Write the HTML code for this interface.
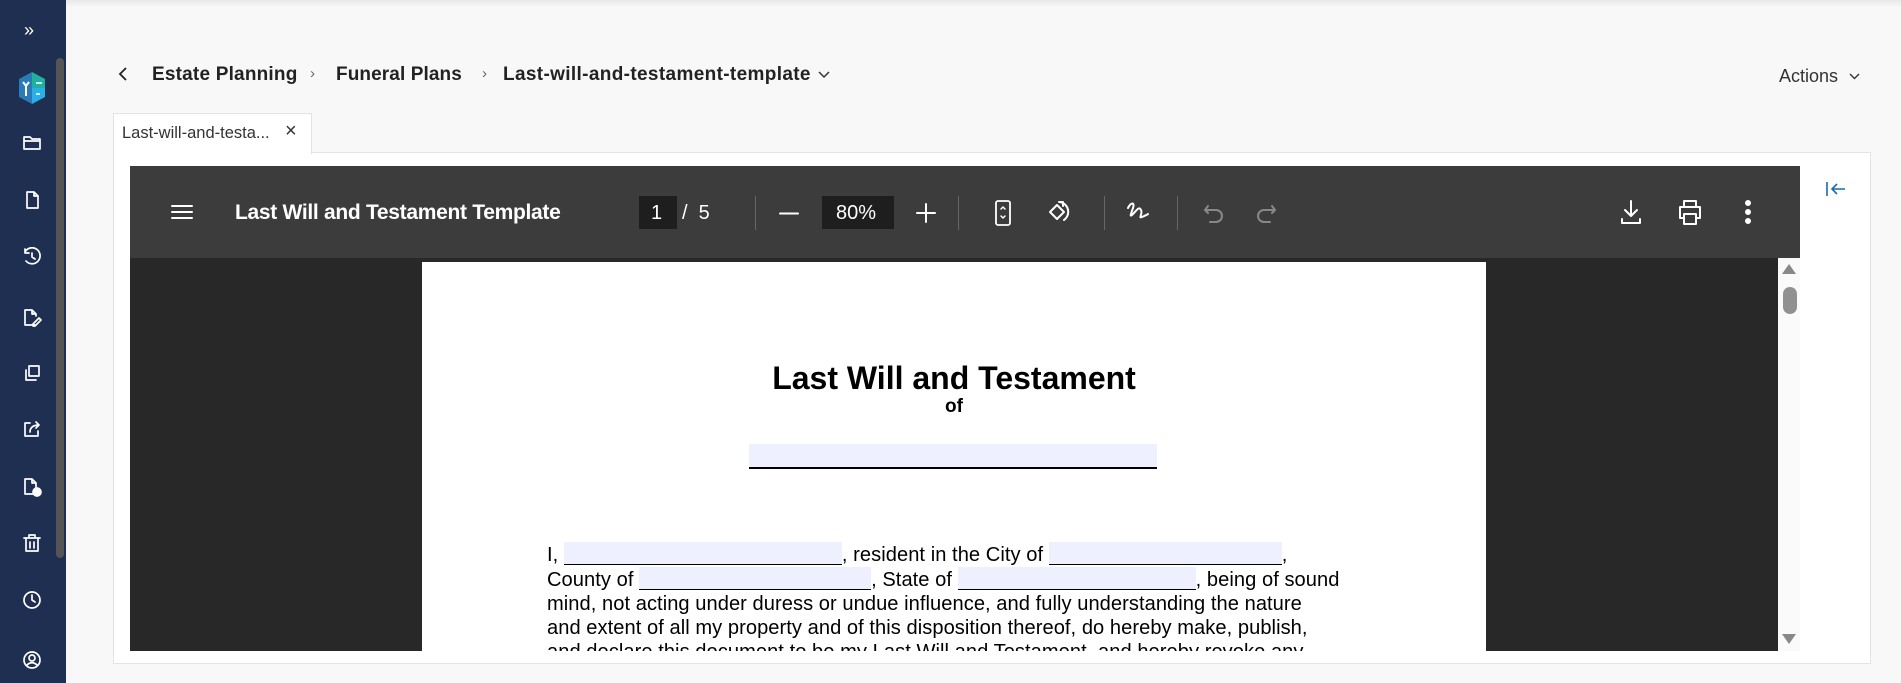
<!DOCTYPE html>
<html><head><style>
*{margin:0;padding:0;box-sizing:border-box}
body{width:1901px;height:683px;overflow:hidden;background:#f8f8f8;font-family:"Liberation Sans",sans-serif;position:relative}
.abs{position:absolute}
.sb{left:0;top:0;width:66px;height:683px;background:#1f2f52}
.ic{position:absolute;left:22px;width:20px;height:20px}
.ic svg{width:20px;height:20px;fill:none;stroke:#fff;stroke-width:1.7;stroke-linecap:round;stroke-linejoin:round}
.bc{top:64px;font-size:19px;font-weight:bold;color:#222}
.tb svg{position:absolute;fill:none;stroke:#fff;stroke-width:2;stroke-linecap:round;stroke-linejoin:round}
.doc{font-family:"Liberation Sans",Arial,sans-serif;color:#000}
.f{display:inline-block;background:#eef0ff;border-bottom:1px solid #000;height:23px;vertical-align:-4px}
.sep{position:absolute;top:196px;width:1px;height:34px;background:#666}
</style></head><body>
<div class="abs" style="left:0;top:0;width:1901px;height:7px;background:linear-gradient(#e8e8e8,#f8f8f8)"></div>
<div class="abs sb"></div>
<div class="abs" style="left:56px;top:58px;width:8px;height:500px;background:#555;border-radius:4px"></div>
<div class="abs" style="left:24px;top:20px;color:#fff;font-size:18px">»</div>
<svg class="abs" style="left:15px;top:70px" width="34" height="36" viewBox="0 0 34 36"><path d="M17 2 L4 9 V27 L17 34Z" fill="#2a7bb5"/><path d="M17 2 L30 9 V18 H17Z" fill="#20b0a0"/><path d="M17 18 H30 V27 L17 34Z" fill="#2ab0e8"/><path d="M8 12 L11 16 L14 12 M11 16 V26" stroke="#fff" stroke-width="2" fill="none"/><path d="M21 13 H27 M21 24 H25" stroke="#fff" stroke-width="1.5"/></svg>
<div class="ic" style="top:133px"><svg viewBox="0 0 20 20"><path d="M2 4h6l2 2h8v10H2z M2 8h16"/></svg></div>
<div class="ic" style="top:190px"><svg viewBox="0 0 20 20"><path d="M5 2h7l4 4v12H5z M12 2v4h4"/></svg></div>
<div class="ic" style="top:247px"><svg viewBox="0 0 20 20"><path d="M3 5A8 8 0 1 1 4 14 M3 2v4h4 M10 6v4l3 2"/></svg></div>
<div class="ic" style="top:308px"><svg viewBox="0 0 20 20"><path d="M13 17H3V2h7l4 4v2 M10 2v4h4 M11 16l6-6 2 2-6 6h-2z"/></svg></div>
<div class="ic" style="top:363px"><svg viewBox="0 0 20 20"><path d="M7 3h10v10H7z M4 7v10h10"/></svg></div>
<div class="ic" style="top:419px"><svg viewBox="0 0 20 20"><path d="M8 4H3v13h13v-5 M8 13c0-5 4-7 9-7 M14 3l3 3-3 3"/></svg></div>
<div class="ic" style="top:477px"><svg viewBox="0 0 20 20"><path d="M11 17H3V2h7l4 4v4 M10 2v4h4"/><circle cx="15" cy="15" r="4" fill="#fff"/></svg></div>
<div class="ic" style="top:533px"><svg viewBox="0 0 20 20"><path d="M2 5h16 M7 5V2h6v3 M4 5v13h12V5 M8 9v6 M12 9v6"/></svg></div>
<div class="ic" style="top:590px"><svg viewBox="0 0 20 20"><circle cx="10" cy="10" r="8"/><path d="M10 5v5l3 2"/></svg></div>
<div class="ic" style="top:650px"><svg viewBox="0 0 20 20"><circle cx="10" cy="10" r="8"/><circle cx="10" cy="8" r="3"/><path d="M5 15c3-3 7-3 10 0"/></svg></div>

<svg class="abs" style="left:118px;top:67px" width="10" height="14"><path d="M8 1L2 7l6 6" stroke="#222" stroke-width="1.8" fill="none"/></svg>
<div class="abs bc" style="left:152px;letter-spacing:0.2px">Estate Planning</div>
<div class="abs" style="left:310px;top:65px;font-size:15px;color:#666">›</div>
<div class="abs bc" style="left:336px;letter-spacing:0.1px">Funeral Plans</div>
<div class="abs" style="left:482px;top:65px;font-size:15px;color:#666">›</div>
<div class="abs bc" style="left:503px;letter-spacing:0.35px">Last-will-and-testament-template</div>
<svg class="abs" style="left:818px;top:71px" width="12" height="8"><path d="M1 1l5 5 5-5" stroke="#333" stroke-width="1.5" fill="none"/></svg>
<div class="abs" style="left:1779px;top:66px;font-size:18px;color:#333">Actions</div>
<svg class="abs" style="left:1849px;top:73px" width="11" height="8"><path d="M1 1l4.5 4.5 4.5-4.5" stroke="#333" stroke-width="1.4" fill="none"/></svg>

<div class="abs" style="left:113px;top:152px;width:1758px;height:512px;background:#fff;border:1px solid #e3e3e3"></div>
<div class="abs" style="left:113px;top:113px;width:199px;height:41px;background:#fff;border:1px solid #e3e3e3;border-bottom:none"></div>
<div class="abs" style="left:122px;top:124px;font-size:16.5px;color:#333">Last-will-and-testa...</div>
<div class="abs" style="left:285px;top:120px;font-size:20px;color:#333">×</div>

<div class="abs" style="left:130px;top:166px;width:1670px;height:485px;background:#282828"></div>
<div class="abs tb" style="left:130px;top:166px;width:1670px;height:92px;background:#3c3c3c"></div>
<div class="tb">
<svg style="left:171px;top:204px" width="22" height="16"><path d="M1 2h20M1 8h20M1 14h20"/></svg>
<div class="abs" style="left:235px;top:201px;font-size:21px;color:#fff;font-weight:bold;letter-spacing:-0.3px">Last Will and Testament Template</div>
<div class="abs" style="left:639px;top:196px;width:38px;height:33px;background:#1e1e1e"></div>
<div class="abs" style="left:651px;top:202px;font-size:20px;color:#fff">1</div>
<div class="abs" style="left:682px;top:202px;font-size:20px;color:#fff">/ &nbsp;5</div>
<div class="sep" style="left:755px"></div>
<svg style="left:779px;top:212px" width="20" height="3"><path d="M1 1.5h18"/></svg>
<div class="abs" style="left:822px;top:196px;width:72px;height:33px;background:#1e1e1e"></div>
<div class="abs" style="left:836px;top:202px;font-size:20px;color:#fff">80%</div>
<svg style="left:916px;top:203px" width="20" height="20"><path d="M10 1v18M1 10h18"/></svg>
<div class="sep" style="left:958px"></div>
<svg style="left:994px;top:200px" width="18" height="26"><rect x="2" y="1" width="14" height="24" rx="2" stroke-width="1.8"/><path d="M7 9l2-2 2 2M7 16l2 2 2-2" stroke-width="1.5"/></svg>
<svg style="left:1044px;top:199px" width="28" height="26"><path d="M6 13l7-7 7 7-7 7z"/><path d="M16 3a10 10 0 0 1 4 18 M15 3h4v4" /></svg>
<div class="sep" style="left:1104px"></div>
<svg style="left:1126px;top:200px" width="24" height="24"><path d="M2 8c3-6 7-6 5 0s-4 10 0 6 6-8 8-4-3 9 1 7 5-2 6-3"/></svg>
<div class="sep" style="left:1177px"></div>
<svg style="left:1203px;top:202px" width="22" height="22"><path d="M5 4L2 8l3 3M2 8h11a6 6 0 0 1 0 12h-6" stroke="#888"/></svg>
<svg style="left:1255px;top:202px" width="22" height="22"><path d="M17 4l3 4-3 3M20 8H9a6 6 0 0 0 0 12h6" stroke="#888"/></svg>
<svg style="left:1620px;top:199px" width="22" height="26"><path d="M11 2v15M5 11l6 6 6-6M2 20v4h18v-4"/></svg>
<svg style="left:1676px;top:199px" width="28" height="26"><path d="M8 8V2h12v6M4 8h20v11h-4M8 19H4V8M8 15h12v10H8z"/></svg>
<svg style="left:1743px;top:200px" width="10" height="24"><circle cx="5" cy="3" r="2" fill="#fff"/><circle cx="5" cy="12" r="2" fill="#fff"/><circle cx="5" cy="21" r="2" fill="#fff"/></svg>
</div>
<svg class="abs" style="left:1825px;top:181px" width="22" height="16"><path d="M2 1v14M20 8H7M12 3L7 8l5 5" stroke="#1a6bb0" stroke-width="1.6" fill="none"/></svg>

<div class="abs" style="left:1778px;top:258px;width:22px;height:393px;background:#fafafa"></div>
<svg class="abs" style="left:1782px;top:264px" width="14" height="10"><path d="M7 0L14 10H0z" fill="#888"/></svg>
<div class="abs" style="left:1783px;top:287px;width:14px;height:27px;background:#909090;border-radius:7px"></div>
<svg class="abs" style="left:1782px;top:634px" width="14" height="10"><path d="M0 0H14L7 10z" fill="#888"/></svg>

<div class="abs doc" style="left:422px;top:262px;width:1064px;height:389px;background:#fff;overflow:hidden">
<div style="position:absolute;left:0;width:1064px;top:98px;text-align:center;font-size:32px;font-weight:bold">Last Will and Testament</div>
<div style="position:absolute;left:0;width:1064px;top:134px;text-align:center;font-size:19px;font-weight:bold">of</div>
<div style="position:absolute;left:327px;top:182px;width:408px;height:25px;background:#eef0ff;border-bottom:2px solid #000"></div>
<div style="position:absolute;left:125px;top:280px;width:830px;font-size:20.1px;line-height:24px;white-space:nowrap;letter-spacing:0.05px">
I, <span class="f" style="width:278px"></span>, resident in the City of <span class="f" style="width:233px"></span>,<br>
County of <span class="f" style="width:232px"></span>, State of <span class="f" style="width:238px"></span>, being of sound<br>
mind, not acting under duress or undue influence, and fully understanding the nature<br>
and extent of all my property and of this disposition thereof, do hereby make, publish,<br>
and declare this document to be my Last Will and Testament, and hereby revoke any
</div>
</div>
</body></html>
